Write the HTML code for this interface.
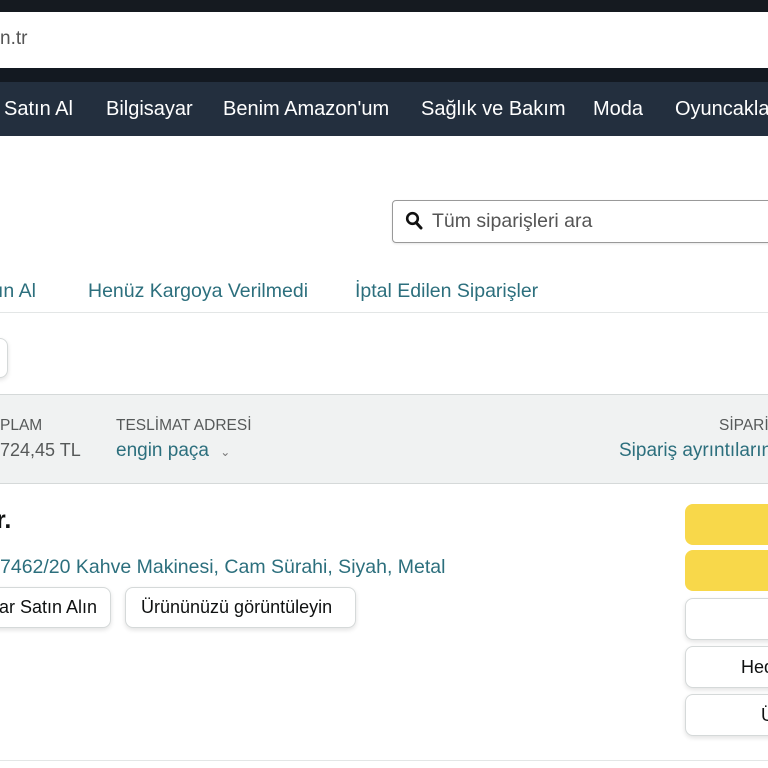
<!DOCTYPE html>
<html><head><meta charset="utf-8"><style>
*{margin:0;padding:0;box-sizing:border-box}
body{width:768px;height:768px;overflow:hidden;background:#fff;font-family:"Liberation Sans","DejaVu Sans",sans-serif;position:relative}
.a{position:absolute;white-space:nowrap}
.nav{color:#fff;font-size:20px;top:98px}
.tab{color:#2c6f7d;font-size:19.5px;top:280px}
.lbl{color:#565959;font-size:15.5px;top:417px}
.val{font-size:19px;top:440px}
.btn{position:absolute;border:1px solid #d5d9d9;border-radius:8px;background:#fff;box-shadow:0 2px 5px rgba(15,17,17,.12);font-size:18px;color:#0f1111}
.yb{position:absolute;left:685px;width:100px;border-radius:8px;background:#f8d84a;height:41px}
</style></head><body>
<div class="a" style="left:0;top:0;width:768px;height:12px;background:#151a20"></div>
<div class="a" style="left:0;top:28px;font-size:19px;color:#555">n.tr</div>
<div class="a" style="left:0;top:68px;width:768px;height:14px;background:#131921"></div>
<div class="a" style="left:0;top:82px;width:768px;height:54px;background:#232f3e"></div>
<div class="a nav" style="left:4px">Satın Al</div>
<div class="a nav" style="left:106px">Bilgisayar</div>
<div class="a nav" style="left:223px">Benim Amazon'um</div>
<div class="a nav" style="left:421px">Sağlık ve Bakım</div>
<div class="a nav" style="left:593px">Moda</div>
<div class="a nav" style="left:675px">Oyuncaklar</div>

<div class="a" style="left:392px;top:200px;width:400px;height:43px;border:1px solid #999;border-radius:4px;box-shadow:0 1px 2px rgba(0,0,0,.1)"></div>
<svg class="a" style="left:405px;top:211px" width="18" height="20" viewBox="0 0 18 20"><circle cx="7.5" cy="7.5" r="5.3" fill="none" stroke="#111" stroke-width="2.6"/><path d="M11 11.5l5 5.5" stroke="#111" stroke-width="3" stroke-linecap="round"/></svg>
<div class="a" style="left:432px;top:210px;font-size:19.5px;color:#555">Tüm siparişleri ara</div>

<div class="a tab" style="left:-2px">ın Al</div>
<div class="a tab" style="left:88px">Henüz Kargoya Verilmedi</div>
<div class="a tab" style="left:355px">İptal Edilen Siparişler</div>
<div class="a" style="left:0;top:312px;width:768px;height:1px;background:#e3e6e6"></div>

<div class="btn" style="left:-20px;top:338px;width:28px;height:40px"></div>

<div class="a" style="left:-2px;top:394px;width:780px;height:90px;background:#f0f2f2;border:1px solid #d5d9d9"></div>
<div class="a lbl" style="left:0">PLAM</div>
<div class="a lbl" style="left:116px">TESLİMAT ADRESİ</div>
<div class="a lbl" style="left:719px">SİPARİ</div>
<div class="a val" style="left:0;color:#565959;font-size:18px">724,45 TL</div>
<div class="a val" style="left:116px;color:#2c6f7d">engin paça <span style="font-size:12px;color:#777;margin-left:6px">&#8964;</span></div>
<div class="a val" style="left:619px;color:#2c6f7d">Sipariş ayrıntıların</div>

<div class="a" style="left:-4px;top:506px;font-size:25px;font-weight:bold;color:#0f1111">r.</div>
<div class="a" style="left:0;top:556px;font-size:19.5px;color:#2c6f7d">7462/20 Kahve Makinesi, Cam Sürahi, Siyah, Metal</div>
<div class="btn" style="left:-20px;top:587px;width:131px;height:41px;padding:9px 0 0 18px">ar Satın Alın</div>
<div class="btn" style="left:125px;top:587px;width:231px;height:41px;padding:9px 0 0 15px">Ürününüzü görüntüleyin</div>

<div class="yb" style="top:504px"></div>
<div class="yb" style="top:550px"></div>
<div class="btn" style="left:685px;top:598px;width:100px;height:42px"></div>
<div class="btn" style="left:685px;top:646px;width:100px;height:42px;padding:10px 0 0 55px">Hed</div>
<div class="btn" style="left:685px;top:694px;width:100px;height:42px;padding:10px 0 0 75px">Ü</div>
<div class="a" style="left:0;top:760px;width:768px;height:1px;background:#e3e6e6"></div>
</body></html>
